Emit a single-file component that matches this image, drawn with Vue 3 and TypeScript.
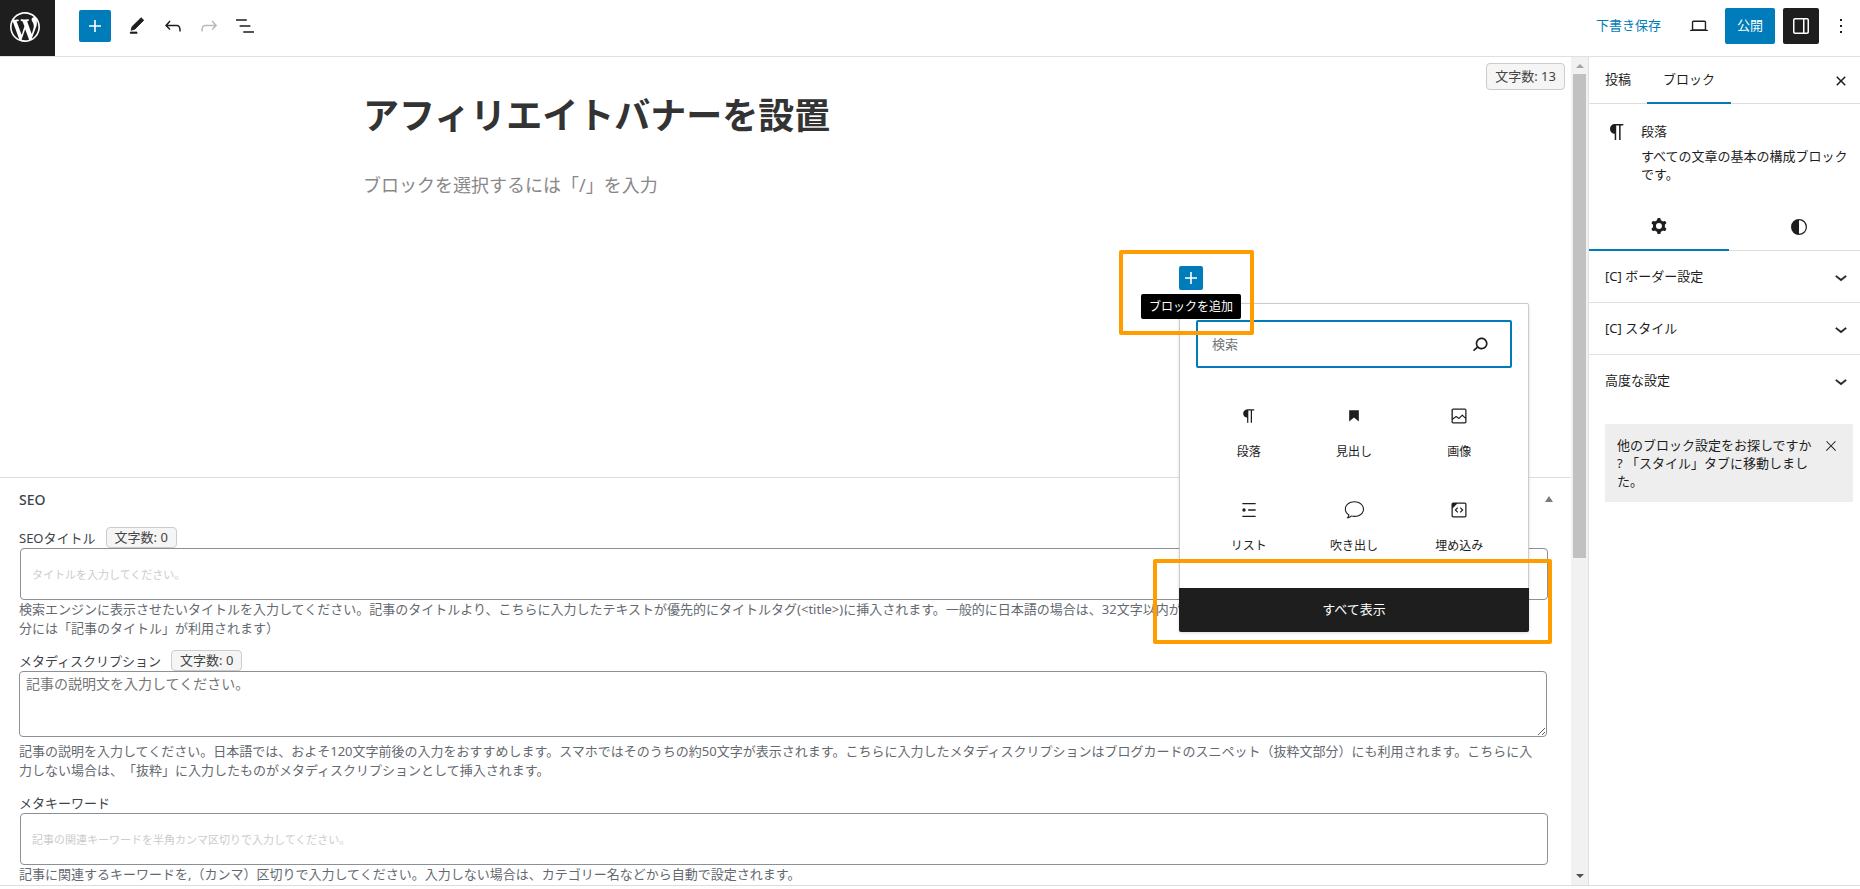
<script setup lang="ts">
import { ref } from 'vue'

interface BlockType {
  name: string
  icon: string
}

const icons: Record<string, string> = {
  plus: 'M18 11.2h-5.2V6h-1.6v5.2H6v1.6h5.2V18h1.6v-5.2H18z',
  edit: 'M20.1 5.1L16.9 2 6.2 12.7l-1.3 4.4 4.5-1.3L20.1 5.1zM4 20.8h8v-1.5H4v1.5z',
  undo: 'M18.3 11.7c-.6-.6-1.4-.9-2.3-.9H6.7l2.9-3.3-1.1-1-4.5 5L8.5 16l1-1-2.7-2.7H16c.5 0 .9.2 1.3.5 1 1 1 3.4 1 4.5v.3h1.5v-.2c0-1.5 0-4.3-1.5-5.7z',
  redo: 'M15.6 6.5l-1.1 1 2.9 3.3H8c-.9 0-1.7.3-2.3.9-1.4 1.5-1.4 4.2-1.4 5.6v.2h1.5v-.3c0-1.1 0-3.5 1-4.5.3-.3.7-.5 1.3-.5h9.2L14.5 15l1.1 1.1 4.6-4.6-4.6-5z',
  outline: 'M13.8 5.2H3v1.5h10.8V5.2zm-3.6 12v1.5H21v-1.5H10.2zm7.2-6H6.6v1.5h10.8v-1.5z',
  laptop: 'M20.5 16h-.7V8c0-1.1-.9-2-2-2H6.2c-1.1 0-2 .9-2 2v8h-.7c-.8 0-1.5.7-1.5 1.5h20c0-.8-.7-1.5-1.5-1.5zM5.7 8c0-.3.2-.5.5-.5h11.6c.3 0 .5.2.5.5v7.6H5.7V8z',
  drawer: 'M18 4H6c-1.1 0-2 .9-2 2v12c0 1.1.9 2 2 2h12c1.1 0 2-.9 2-2V6c0-1.1-.9-2-2-2zm-4 14.5H6c-.3 0-.5-.2-.5-.5V6c0-.3.2-.5.5-.5h8v13zm4.5-.5c0 .3-.2.5-.5.5h-2.5v-13H18c.3 0 .5.2.5.5v12z',
  dots: 'M13 19h-2v-2h2v2zm0-6h-2v-2h2v2zm0-6h-2V5h2v2z',
  close: 'M12 13.06l3.712 3.713 1.061-1.06L13.061 12l3.712-3.712-1.06-1.06L12 10.938 8.288 7.227l-1.061 1.06L10.939 12l-3.712 3.712 1.06 1.061L12 13.061z',
  thinClose: 'M13 11.8l6.1-6.3-1-1-6.1 6.2-6.1-6.2-1 1 6.1 6.3-6.5 6.7 1 1 6.5-6.6 6.5 6.6 1-1z',
  chevron: 'M17.5 11.6L12 16l-5.5-4.4.9-1.2L12 14l4.5-3.6 1 1.2z',
  search: 'M13.5 6C10.5 6 8 8.5 8 11.5c0 1.1.3 2.1.9 3l-3.4 3 1 1.1 3.4-2.9c1 .9 2.2 1.4 3.6 1.4 3 0 5.5-2.5 5.5-5.5C19 8.5 16.5 6 13.5 6zm0 9.5c-2.2 0-4-1.8-4-4s1.8-4 4-4 4 1.8 4 4-1.8 4-4 4z',
  cog: 'M10.289 4.836A1 1 0 0111.275 4h1.306a1 1 0 01.987.836l.244 1.466c.787.26 1.503.679 2.108 1.218l1.393-.522a1 1 0 011.216.437l.653 1.13a1 1 0 01-.23 1.273l-1.148.944a6.025 6.025 0 010 2.435l1.149.946a1 1 0 01.23 1.272l-.653 1.13a1 1 0 01-1.216.437l-1.394-.522c-.605.54-1.32.958-2.108 1.218l-.244 1.466a1 1 0 01-.987.836h-1.306a1 1 0 01-.986-.836l-.244-1.466a5.995 5.995 0 01-2.108-1.218l-1.394.522a1 1 0 01-1.217-.436l-.653-1.131a1 1 0 01.23-1.272l1.149-.946a6.026 6.026 0 010-2.435l-1.148-.944a1 1 0 01-.23-1.272l.653-1.131a1 1 0 011.217-.437l1.393.522a5.994 5.994 0 012.108-1.218l.244-1.466zM14.929 12a3 3 0 11-6 0 3 3 0 016 0z',
  contrast: 'M12 4a8 8 0 100 16 8 8 0 000-16zm0 1.2a6.8 6.8 0 010 13.6z',
  paragraph: 'M18.3 4H9.9v-.1l-.9.2c-2.3.4-4 2.4-4 4.8s1.7 4.4 4 4.8l.7.1V20h1.5V5.5h2.9V20h1.5V5.5h2.7V4z',
  heading: 'M6.2 5.2v13.4l5.8-4.8 5.8 4.8V5.2z',
  image: 'M19 3H5c-1.1 0-2 .9-2 2v14c0 1.1.9 2 2 2h14c1.1 0 2-.9 2-2V5c0-1.1-.9-2-2-2zM5 4.5h14c.3 0 .5.2.5.5v8.4l-3-2.9c-.3-.3-.8-.3-1 0L11.9 14 9 12c-.3-.2-.6-.2-.8 0l-3.6 2.6V5c-.1-.3.1-.5.4-.5zm14 15H5c-.3 0-.5-.2-.5-.5v-2.4l4.1-3 3 1.9c.3.2.7.2.9-.1L16 12l3.5 3.4V19c0 .3-.2.5-.5.5z',
  list: 'M4 3.5h16V5H4zM11 11.2h9v1.6h-9zM4 19h16v1.5H4zM6 10a2 2 0 110 4 2 2 0 010-4z',
  balloon: 'M12.5 1.5C6 1.5 1 5.6 1 11c0 3 1.5 5.4 4 7.1-.1 1.5-.9 2.8-2 3.9 2.2.2 4.5-.6 6.2-2.1 1 .3 2.2.4 3.3.4C19 20.3 24 16.4 24 11s-5-9.5-11.500-9.500zm0 1.300c5.800 0 10.200 3.500 10.200 8.200s-4.400 8-10.200 8c-1.200 0-2.400-.2-3.600-.5-1 .8-2 1.400-3.200 1.700.4-.9.7-1.8.7-2.8C3.8 16 2.300 13.700 2.300 11c0-4.700 4.400-8.200 10.200-8.200z',
  embed: 'M19 3H5c-1.100 0-2 .9-2 2v14c0 1.100.9 2 2 2h14c1.100 0 2-.9 2-2V5c0-1.100-.9-2-2-2zm.5 16c0 .3-.2.5-.5.5H5c-.3 0-.5-.2-.5-.5V9.800l5.300-5.300H19c.3 0 .5.2.5.5v14zM10 8.700L6.700 12l3.300 3.300 1-1L8.700 12 11 9.700zM14 8.700l-1 1 2.300 2.300-2.300 2.300 1 1 3.300-3.300z',
  wordpress: 'M20 10c0-5.51-4.49-10-10-10C4.48 0 0 4.49 0 10c0 5.52 4.48 10 10 10 5.51 0 10-4.48 10-10zM7.78 15.37L4.37 6.22c.55-.02 1.17-.08 1.17-.08.5-.06.44-1.13-.06-1.11 0 0-1.45.11-2.37.11-.18 0-.37 0-.58-.01C4.12 2.69 6.87 1.11 10 1.11c2.33 0 4.45.87 6.05 2.34-.68-.11-1.65.39-1.65 1.58 0 .74.45 1.36.9 2.1.35.61.55 1.36.55 2.46 0 1.49-1.4 5-1.4 5l-3.03-8.37c.54-.02.82-.17.82-.17.5-.05.44-1.25-.06-1.22 0 0-1.44.12-2.38.12-.87 0-2.33-.12-2.33-.12-.5-.03-.56 1.2-.06 1.22l.92.08 1.26 3.41zM17.41 10c.24-.64.74-1.87.43-4.25.7 1.29 1.05 2.71 1.05 4.25 0 3.29-1.73 6.24-4.4 7.78.97-2.59 1.94-5.2 2.92-7.78zM6.1 18.09C3.12 16.65 1.11 13.53 1.11 10c0-1.3.23-2.48.72-3.59C3.25 10.3 4.67 14.2 6.1 18.09zm4.03-6.63l2.58 6.98c-.86.29-1.76.45-2.71.45-.79 0-1.57-.11-2.29-.33.81-2.38 1.62-4.74 2.42-7.1z',
}

const blocks: BlockType[] = [
  { name: '段落', icon: 'paragraph' },
  { name: '見出し', icon: 'heading' },
  { name: '画像', icon: 'image' },
  { name: 'リスト', icon: 'list' },
  { name: '吹き出し', icon: 'balloon' },
  { name: '埋め込み', icon: 'embed' },
]

const panels: string[] = ['[C] ボーダー設定', '[C] スタイル', '高度な設定']

const query = ref('')
const seoTitle = ref('')
const metaDescription = ref('')
const metaKeywords = ref('')
</script>

<template>
  <div class="app">
    <header class="topbar">
      <a class="logo" href="#" aria-label="投稿一覧">
        <svg width="36" height="36" viewBox="-2 -2 24 24"><path :d="icons.wordpress" /></svg>
      </a>
      <div class="tools">
        <button class="add" type="button" aria-label="ブロック挿入ツール">
          <svg width="24" height="24" viewBox="0 0 24 24"><path :d="icons.plus" /></svg>
        </button>
        <button class="tool" type="button" aria-label="ツール">
          <svg width="20" height="20" viewBox="0 0 24 24"><path :d="icons.edit" stroke="currentColor" stroke-linejoin="round" /></svg>
        </button>
        <button class="tool" type="button" aria-label="元に戻す">
          <svg width="24" height="24" viewBox="0 0 24 24"><path :d="icons.undo" /></svg>
        </button>
        <button class="tool" type="button" aria-label="やり直す" disabled>
          <svg width="24" height="24" viewBox="0 0 24 24"><path :d="icons.redo" /></svg>
        </button>
        <button class="tool" type="button" aria-label="リスト表示">
          <svg width="24" height="24" viewBox="0 0 24 24"><path :d="icons.outline" /></svg>
        </button>
      </div>
      <div class="actions">
        <button class="draft" type="button">下書き保存</button>
        <button class="preview" type="button" aria-label="プレビュー">
          <svg width="22" height="22" viewBox="0 0 24 24"><path :d="icons.laptop" /></svg>
        </button>
        <button class="publish" type="button">公開</button>
        <button class="drawer" type="button" aria-label="設定">
          <svg width="24" height="24" viewBox="0 0 24 24"><path :d="icons.drawer" /></svg>
        </button>
        <button class="more" type="button" aria-label="オプション">
          <svg width="24" height="24" viewBox="0 0 24 24"><path :d="icons.dots" /></svg>
        </button>
      </div>
    </header>

    <div class="body">
      <main class="editor">
        <section class="canvas">
          <span class="count floating">文字数: 13</span>
          <div class="column">
            <h1>アフィリエイトバナーを設置</h1>
            <p class="prompt">ブロックを選択するには「/」を入力</p>
            <div class="appender">
              <div class="anchor">
                <button class="inserter" type="button" aria-label="ブロックを追加">
                  <svg width="24" height="24" viewBox="0 0 24 24"><path :d="icons.plus" /></svg>
                </button>
                <div class="popover">
                  <div class="search">
                    <input v-model="query" type="text" placeholder="検索" aria-label="検索" />
                    <svg width="26" height="26" viewBox="0 0 24 24"><path :d="icons.search" /></svg>
                  </div>
                  <div class="blocks">
                    <button v-for="block in blocks" :key="block.name" class="block" type="button">
                      <svg width="20" height="20" viewBox="0 0 24 24"><path :d="icons[block.icon]" fill-rule="evenodd" /></svg>
                      <span>{{ block.name }}</span>
                    </button>
                  </div>
                  <button class="all" type="button">すべて表示</button>
                  <div class="mark mark-all"></div>
                </div>
                <span class="tooltip">ブロックを追加</span>
                <div class="mark mark-add"></div>
              </div>
            </div>
          </div>
        </section>

        <section class="seo">
          <div class="seo-head">
            <h2>SEO</h2>
            <button type="button" aria-label="パネルを切り替え">
              <svg width="8" height="6" viewBox="0 0 8 6"><path d="M4 0l4 6H0z" /></svg>
            </button>
          </div>
          <div class="field">
            <div class="label-row">
              <label for="seo-title">SEOタイトル</label>
              <span class="count">文字数: {{ seoTitle.length }}</span>
            </div>
            <input id="seo-title" v-model="seoTitle" type="text" placeholder="タイトルを入力してください。" />
            <p>検索エンジンに表示させたいタイトルを入力してください。記事のタイトルより、こちらに入力したテキストが優先的にタイトルタグ(&lt;title&gt;)に挿入されます。一般的に日本語の場合は、32文字以内が最適とされています。（※ページや投稿における「題名」部分には「記事のタイトル」が利用されます）</p>
          </div>
          <div class="field">
            <div class="label-row">
              <label for="meta-description">メタディスクリプション</label>
              <span class="count">文字数: {{ metaDescription.length }}</span>
            </div>
            <textarea id="meta-description" v-model="metaDescription" placeholder="記事の説明文を入力してください。"></textarea>
            <p>記事の説明を入力してください。日本語では、およそ120文字前後の入力をおすすめします。スマホではそのうちの約50文字が表示されます。こちらに入力したメタディスクリプションはブログカードのスニペット（抜粋文部分）にも利用されます。こちらに入力しない場合は、「抜粋」に入力したものがメタディスクリプションとして挿入されます。</p>
          </div>
          <div class="field">
            <div class="label-row">
              <label for="meta-keywords">メタキーワード</label>
            </div>
            <input id="meta-keywords" v-model="metaKeywords" type="text" placeholder="記事の関連キーワードを半角カンマ区切りで入力してください。" />
            <p>記事に関連するキーワードを,（カンマ）区切りで入力してください。入力しない場合は、カテゴリー名などから自動で設定されます。</p>
          </div>
        </section>
      </main>

      <div class="scrollbar" aria-hidden="true">
        <svg class="up" width="8" height="4" viewBox="0 0 8 4"><path d="M4 0l4 4H0z" /></svg>
        <div class="track"><div class="thumb"></div></div>
        <svg class="down" width="8" height="4" viewBox="0 0 8 4"><path d="M0 0h8L4 4z" /></svg>
      </div>

      <aside class="sidebar">
        <div class="tabs">
          <button type="button">投稿</button>
          <button type="button" class="active">ブロック</button>
          <button type="button" class="close" aria-label="設定を閉じる">
            <svg width="24" height="24" viewBox="0 0 24 24"><path :d="icons.close" /></svg>
          </button>
        </div>
        <div class="card">
          <svg width="24" height="24" viewBox="0 0 24 24"><path :d="icons.paragraph" /></svg>
          <div>
            <h2>段落</h2>
            <p>すべての文章の基本の構成ブロックです。</p>
          </div>
        </div>
        <div class="icon-tabs">
          <button type="button" class="active" aria-label="設定">
            <svg width="24" height="24" viewBox="0 0 24 24"><path :d="icons.cog" fill-rule="evenodd" /></svg>
          </button>
          <button type="button" aria-label="スタイル">
            <svg width="24" height="24" viewBox="0 0 24 24"><path :d="icons.contrast" fill-rule="evenodd" /></svg>
          </button>
        </div>
        <button v-for="panel in panels" :key="panel" class="panel" type="button">
          <span>{{ panel }}</span>
          <svg width="24" height="24" viewBox="0 0 24 24"><path :d="icons.chevron" stroke="currentColor" stroke-width="0.4" /></svg>
        </button>
        <div class="notice">
          <p>他のブロック設定をお探しですか<br />? 「スタイル」タブに移動しました。</p>
          <button type="button" aria-label="閉じる">
            <svg width="16" height="16" viewBox="0 0 24 24"><path :d="icons.thinClose" /></svg>
          </button>
        </div>
      </aside>
    </div>
    <footer class="foot"></footer>
  </div>
</template>

<style>
body {
  margin: 0;
  background: #fff;
}
</style>

<style scoped>
* {
  box-sizing: border-box;
}

.app {
  display: flex;
  flex-direction: column;
  height: 100vh;
  overflow: hidden;
  background: #fff;
  color: #1e1e1e;
  font-family: "Noto Sans", "Noto Sans CJK JP", sans-serif;
  font-size: 13px;
  line-height: 19px;
  text-spacing-trim: space-all;
}

h1,
h2,
p {
  margin: 0;
}

button {
  display: flex;
  align-items: center;
  justify-content: center;
  padding: 0;
  border: 0;
  background: none;
  color: inherit;
  font: inherit;
  cursor: pointer;
}

svg {
  display: block;
  flex: none;
  fill: currentColor;
}

input,
textarea {
  font-family: inherit;
  outline: none;
}

.topbar {
  display: flex;
  flex: none;
  height: 57px;
  border-bottom: 1px solid #e0e0e0;
}

.logo {
  display: flex;
  align-items: center;
  justify-content: center;
  width: 55px;
  padding: 0 5px 2px 0;
  height: 56px;
  background: #1e1e1e;
  color: #fff;
}

.tools {
  display: flex;
  align-items: center;
  height: 52px;
  padding-left: 24px;
}

.add {
  width: 32px;
  height: 32px;
  margin-right: 8px;
  border-radius: 2px;
  background: #007cba;
  color: #fff;
}

.tool {
  width: 36px;
  height: 36px;
}

.tool:disabled {
  color: #bbb;
}

.actions {
  display: flex;
  align-items: center;
  height: 52px;
  margin-left: auto;
  padding-right: 7px;
}

.draft {
  padding-bottom: 2px;
  color: #007cba;
}

.preview {
  width: 36px;
  height: 36px;
  margin: 0 8px 0 20px;
}

.publish {
  width: 50px;
  height: 36px;
  padding-bottom: 2px;
  border-radius: 2px;
  background: #007cba;
  color: #fff;
}

.drawer {
  width: 36px;
  height: 36px;
  margin: 0 10px 0 8px;
  border-radius: 2px;
  background: #1e1e1e;
  color: #fff;
}

.body {
  display: flex;
  flex: 1;
  min-height: 0;
}

.editor {
  flex: 1;
  min-width: 0;
  overflow: hidden;
}

.canvas {
  position: relative;
  min-height: 420px;
  padding-top: 32px;
}

.count {
  padding: 0 8px;
  border: 1px solid #ccc;
  border-radius: 4px;
  background: #f5f5f5;
  color: #444;
}

.floating {
  position: absolute;
  top: 6px;
  right: 6px;
  padding: 3px 8px;
}

.column {
  max-width: 845px;
  margin: 0 auto;
}

h1 {
  color: #333;
  font-size: 36px;
  line-height: 54px;
  font-weight: 700;
}

.prompt {
  margin-top: 27px;
  color: #888;
  font-size: 18px;
  line-height: 30px;
}

.appender {
  display: flex;
  justify-content: flex-end;
  margin-top: 66px;
  padding-right: 5px;
}

.anchor {
  position: relative;
}

.inserter {
  width: 24px;
  height: 24px;
  border-radius: 2px;
  background: #007cba;
  color: #fff;
}

.popover {
  position: absolute;
  z-index: 2;
  top: 37px;
  left: 0;
  width: 350px;
  border: 1px solid #ccc;
  border-radius: 2px;
  background: #fff;
  box-shadow: 0 1px 3px rgba(0, 0, 0, 0.15);
}

.search {
  display: flex;
  align-items: center;
  height: 48px;
  margin: 16px;
  padding-right: 17px;
  border: 2px solid #007cba;
  border-radius: 2px;
}

.search input {
  flex: 1;
  min-width: 0;
  padding: 0 14px;
  border: 0;
  background: none;
  font-size: 13px;
}

.search input::placeholder {
  color: #757575;
}

.blocks {
  display: grid;
  grid-template-columns: repeat(3, 1fr);
  padding: 2px 16px 14px;
}

.block {
  flex-direction: column;
  gap: 16px;
  height: 94px;
  font-size: 12px;
}

.all {
  width: calc(100% + 2px);
  height: 44px;
  margin: 0 -1px -1px;
  padding-bottom: 2px;
  border-radius: 0 0 2px 2px;
  background: #1e1e1e;
  color: #fff;
}

.tooltip {
  position: absolute;
  z-index: 3;
  top: 28px;
  left: 50%;
  transform: translateX(-50%);
  padding: 3px 8px;
  border-radius: 2px;
  background: #000;
  color: #fff;
  font-size: 12px;
  white-space: nowrap;
}

.mark {
  position: absolute;
  z-index: 4;
  border: 4px solid #ff9d00;
  border-radius: 2px;
  pointer-events: none;
}

.mark-add {
  top: -16px;
  left: -60px;
  width: 135px;
  height: 85px;
}

.mark-all {
  right: -24px;
  bottom: -13px;
  left: -27px;
  height: 85px;
}

.seo {
  padding: 0 24px 0 19px;
  border-top: 1px solid #ddd;
  color: #3c434a;
}

.seo-head {
  display: flex;
  align-items: center;
  justify-content: space-between;
  height: 42px;
}

.seo-head h2 {
  font-size: 14px;
  font-weight: 500;
}

.seo-head button {
  width: 16px;
  height: 16px;
  margin-right: -10px;
  color: #787c82;
}

.field {
  margin-bottom: 13px;
}

.label-row {
  display: flex;
  align-items: flex-end;
  gap: 10px;
  height: 20px;
}

.seo-head + .field {
  margin-top: 8px;
}

.field input,
.field textarea {
  display: block;
  width: 100%;
  border: 1px solid #8c8f94;
  border-radius: 4px;
  background: #fff;
}

.field input {
  height: 52px;
  margin: 0 1px;
  padding: 0 11px;
  font-size: 11px;
}

.field textarea {
  height: 66px;
  margin-bottom: 5px;
  padding: 2px 6px;
  font-size: 14px;
  line-height: 20px;
  resize: vertical;
}

.field input::placeholder {
  color: #ccc;
}

.field textarea::placeholder {
  color: #757575;
}

.field p {
  padding-right: 8px;
  color: #646970;
}

.scrollbar {
  display: flex;
  flex: none;
  flex-direction: column;
  align-items: center;
  width: 17px;
  padding: 7px 0;
  background: #f1f1f1;
}

.track {
  flex: 1;
  width: 13px;
  margin: 6px 0;
}

.thumb {
  height: 61%;
  background: #c1c1c1;
}

.up {
  color: #a3a3a3;
}

.down {
  color: #505050;
}

.sidebar {
  flex: none;
  width: 272px;
  overflow: hidden;
  border-left: 1px solid #e0e0e0;
  line-height: 18px;
}

.tabs {
  display: flex;
  height: 47px;
  border-bottom: 1px solid #ddd;
}

.tabs button {
  height: 47px;
  padding: 0 16px 4px;
}

.tabs .active {
  padding-bottom: 2px;
  border-bottom: 2px solid #007cba;
}

.tabs .close {
  margin-left: auto;
  padding: 0 7px;
}

.card {
  display: flex;
  gap: 12px;
  padding: 16px 8px 20px 16px;
}

.card h2 {
  font-size: 13px;
  font-weight: 400;
  line-height: 22px;
}

.card p {
  margin-top: 5px;
}

.icon-tabs {
  display: grid;
  grid-template-columns: 140px 140px;
  height: 48px;
}

.icon-tabs button {
  border-bottom: 1px solid #ddd;
}

.icon-tabs .active {
  border-bottom: 2px solid #007cba;
}

.panel {
  justify-content: space-between;
  width: 100%;
  height: 52px;
  padding: 0 7px 0 16px;
  border-bottom: 1px solid #e0e0e0;
}

.panel span {
  padding-bottom: 2px;
}

.panel:nth-last-child(2) {
  border-bottom: 0;
}

.notice {
  display: flex;
  align-items: flex-start;
  gap: 9px;
  margin: 17px 7px 0 16px;
  padding: 12px;
  background: #eee;
}

.notice p {
  width: 197px;
}

.notice button {
  height: 20px;
}

.foot {
  flex: none;
  height: 4px;
  border-top: 1px solid #ddd;
}
</style>
